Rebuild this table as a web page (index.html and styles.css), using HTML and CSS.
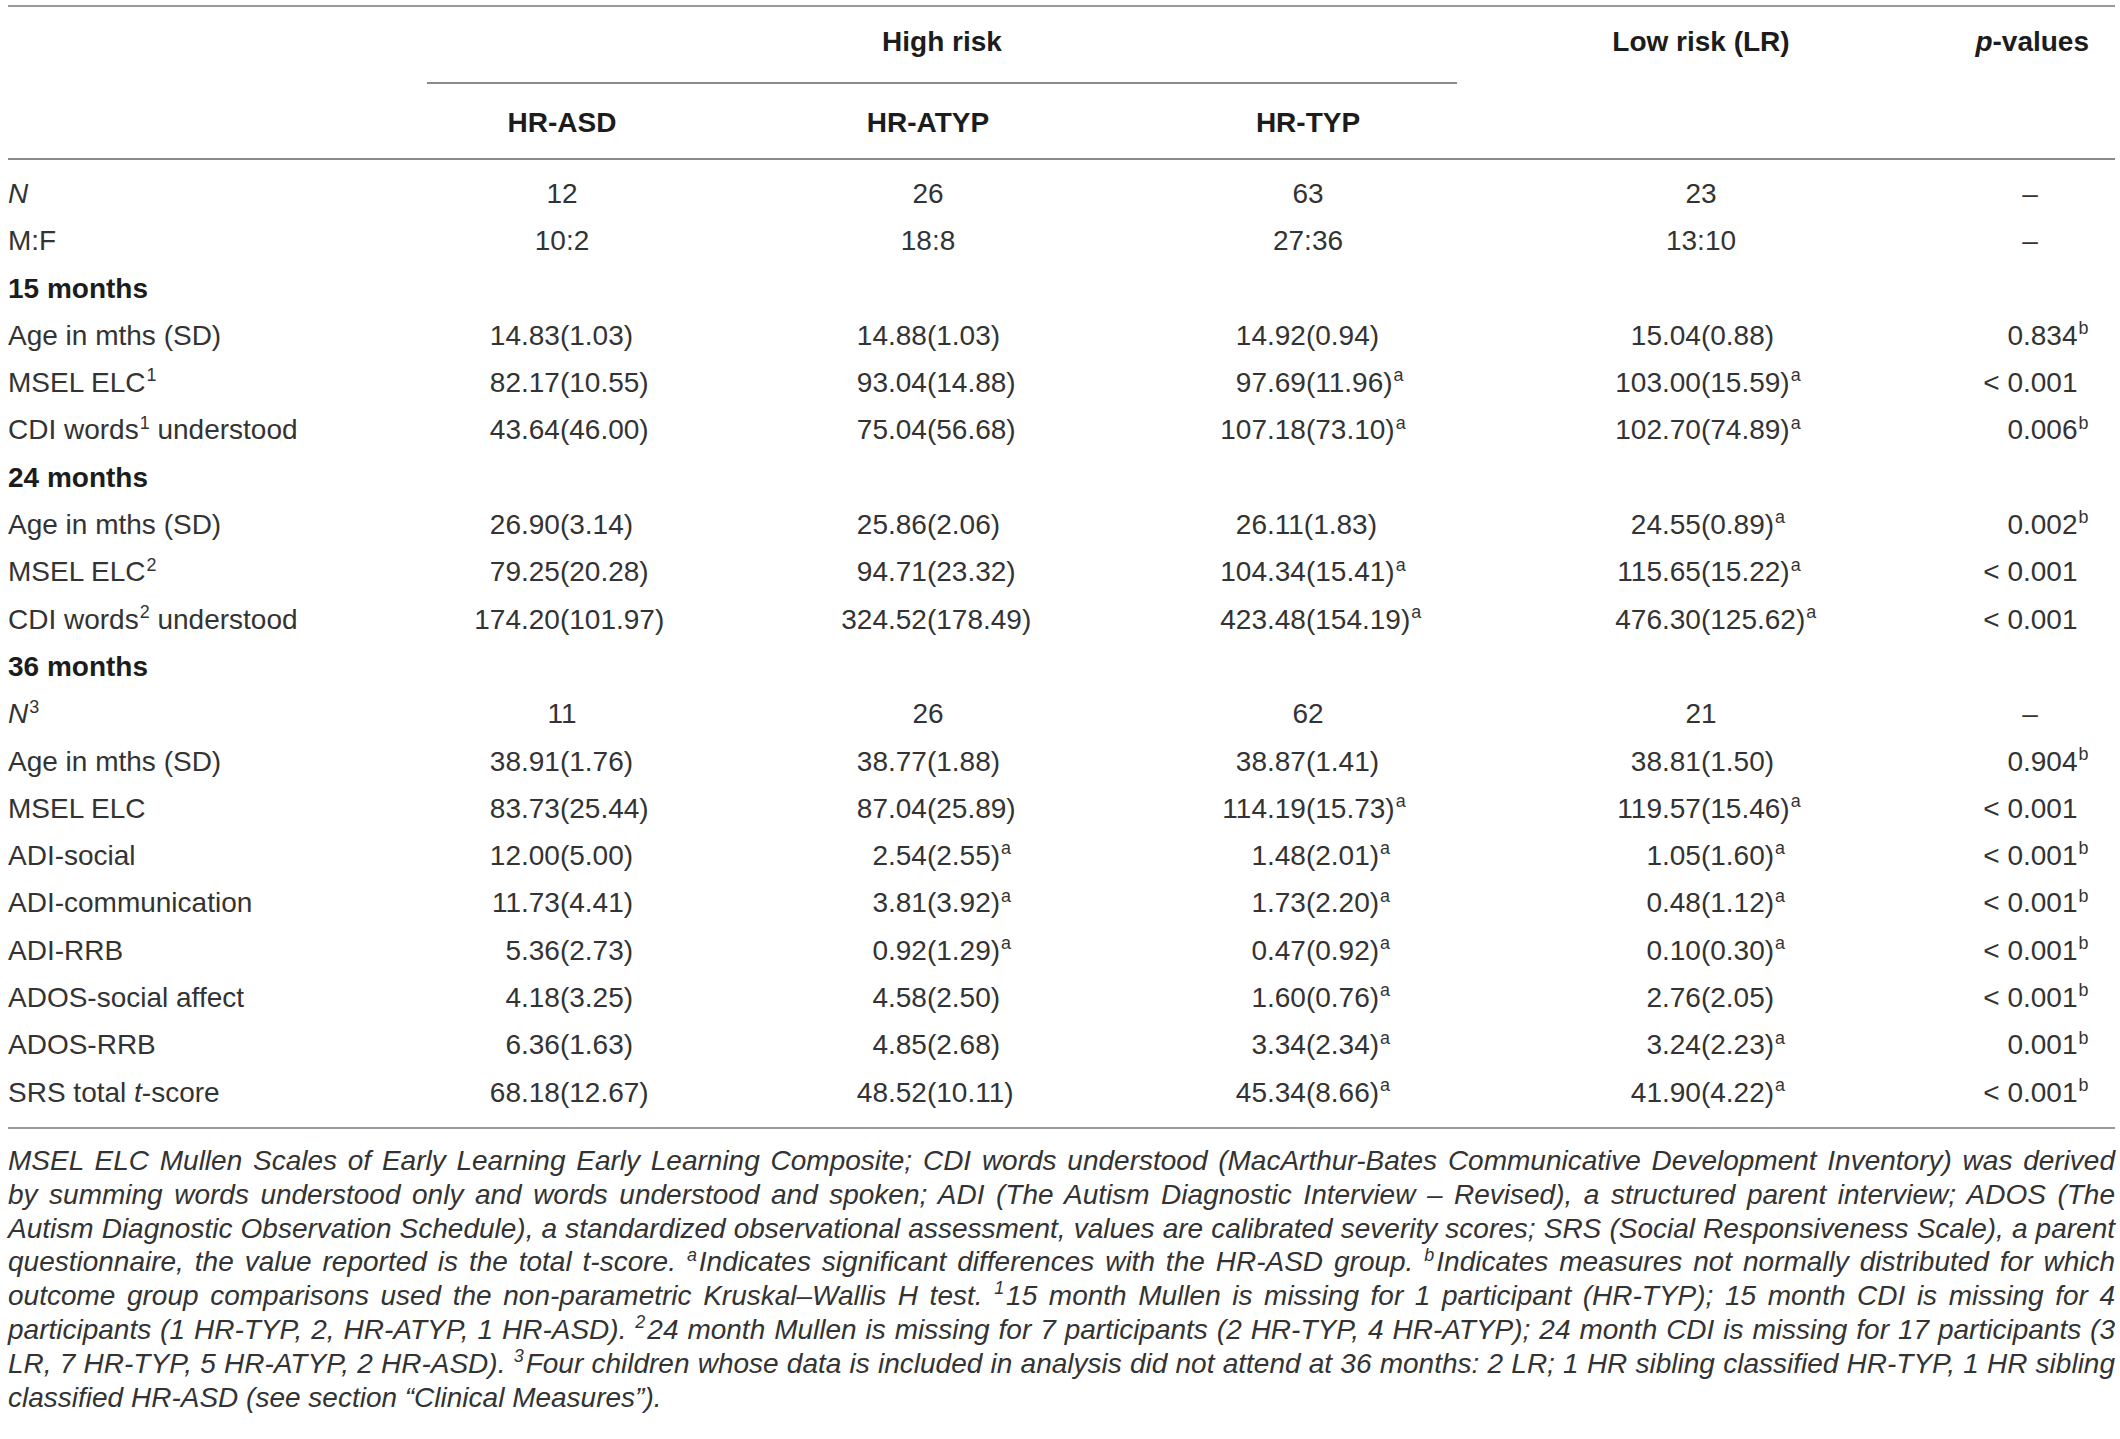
FILE: index.html
```html
<!DOCTYPE html>
<html lang="en">
<head>
<meta charset="UTF-8" />
<title>Participant characteristics by outcome group</title>
<link rel="stylesheet" href="styles.css">
</head>
<body>

<table class="data">
  <colgroup>
    <col class="c-lbl">
    <col class="c-asd">
    <col class="c-atyp">
    <col class="c-typ">
    <col class="c-lr">
    <col class="c-p">
  </colgroup>
  <thead>
    <tr class="top">
      <th></th>
      <th colspan="3" class="group">High risk</th>
      <th>Low risk (LR)</th>
      <th class="pv"><em>p</em>-values</th>
    </tr>
    <tr class="sub">
      <th></th>
      <th>HR-ASD</th>
      <th>HR-ATYP</th>
      <th>HR-TYP</th>
      <th></th>
      <th></th>
    </tr>
  </thead>
  <tbody>
    <tr>
      <td class="lbl"><em>N</em></td>
      <td class="c">12</td><td class="c">26</td><td class="c">63</td><td class="c">23</td><td class="c">–</td>
    </tr>
    <tr>
      <td class="lbl">M:F</td>
      <td class="c">10:2</td><td class="c">18:8</td><td class="c">27:36</td><td class="c">13:10</td><td class="c">–</td>
    </tr>
    <tr class="sect"><td class="lbl" colspan="6">15 months</td></tr>
    <tr>
      <td class="lbl">Age in mths (SD)</td>
      <td class="v"><span class="ip">14</span>.83(1.03)</td>
      <td class="v"><span class="ip">14</span>.88(1.03)</td>
      <td class="v"><span class="ip">14</span>.92(0.94)</td>
      <td class="v"><span class="ip">15</span>.04(0.88)</td>
      <td class="v"><span class="ip">0</span>.834<sup>b</sup></td>
    </tr>
    <tr>
      <td class="lbl">MSEL ELC<sup>1</sup></td>
      <td class="v"><span class="ip">82</span>.17(10.55)</td>
      <td class="v"><span class="ip">93</span>.04(14.88)</td>
      <td class="v"><span class="ip">97</span>.69(11.96)<sup>a</sup></td>
      <td class="v"><span class="ip">103</span>.00(15.59)<sup>a</sup></td>
      <td class="v"><span class="ip">&lt; 0</span>.001</td>
    </tr>
    <tr>
      <td class="lbl">CDI words<sup>1</sup> understood</td>
      <td class="v"><span class="ip">43</span>.64(46.00)</td>
      <td class="v"><span class="ip">75</span>.04(56.68)</td>
      <td class="v"><span class="ip">107</span>.18(73.10)<sup>a</sup></td>
      <td class="v"><span class="ip">102</span>.70(74.89)<sup>a</sup></td>
      <td class="v"><span class="ip">0</span>.006<sup>b</sup></td>
    </tr>
    <tr class="sect"><td class="lbl" colspan="6">24 months</td></tr>
    <tr>
      <td class="lbl">Age in mths (SD)</td>
      <td class="v"><span class="ip">26</span>.90(3.14)</td>
      <td class="v"><span class="ip">25</span>.86(2.06)</td>
      <td class="v"><span class="ip">26</span>.11(1.83)</td>
      <td class="v"><span class="ip">24</span>.55(0.89)<sup>a</sup></td>
      <td class="v"><span class="ip">0</span>.002<sup>b</sup></td>
    </tr>
    <tr>
      <td class="lbl">MSEL ELC<sup>2</sup></td>
      <td class="v"><span class="ip">79</span>.25(20.28)</td>
      <td class="v"><span class="ip">94</span>.71(23.32)</td>
      <td class="v"><span class="ip">104</span>.34(15.41)<sup>a</sup></td>
      <td class="v"><span class="ip">115</span>.65(15.22)<sup>a</sup></td>
      <td class="v"><span class="ip">&lt; 0</span>.001</td>
    </tr>
    <tr>
      <td class="lbl">CDI words<sup>2</sup> understood</td>
      <td class="v"><span class="ip">174</span>.20(101.97)</td>
      <td class="v"><span class="ip">324</span>.52(178.49)</td>
      <td class="v"><span class="ip">423</span>.48(154.19)<sup>a</sup></td>
      <td class="v"><span class="ip">476</span>.30(125.62)<sup>a</sup></td>
      <td class="v"><span class="ip">&lt; 0</span>.001</td>
    </tr>
    <tr class="sect"><td class="lbl" colspan="6">36 months</td></tr>
    <tr>
      <td class="lbl"><em>N</em><sup>3</sup></td>
      <td class="c">11</td><td class="c">26</td><td class="c">62</td><td class="c">21</td><td class="c">–</td>
    </tr>
    <tr>
      <td class="lbl">Age in mths (SD)</td>
      <td class="v"><span class="ip">38</span>.91(1.76)</td>
      <td class="v"><span class="ip">38</span>.77(1.88)</td>
      <td class="v"><span class="ip">38</span>.87(1.41)</td>
      <td class="v"><span class="ip">38</span>.81(1.50)</td>
      <td class="v"><span class="ip">0</span>.904<sup>b</sup></td>
    </tr>
    <tr>
      <td class="lbl">MSEL ELC</td>
      <td class="v"><span class="ip">83</span>.73(25.44)</td>
      <td class="v"><span class="ip">87</span>.04(25.89)</td>
      <td class="v"><span class="ip">114</span>.19(15.73)<sup>a</sup></td>
      <td class="v"><span class="ip">119</span>.57(15.46)<sup>a</sup></td>
      <td class="v"><span class="ip">&lt; 0</span>.001</td>
    </tr>
    <tr>
      <td class="lbl">ADI-social</td>
      <td class="v"><span class="ip">12</span>.00(5.00)</td>
      <td class="v"><span class="ip">2</span>.54(2.55)<sup>a</sup></td>
      <td class="v"><span class="ip">1</span>.48(2.01)<sup>a</sup></td>
      <td class="v"><span class="ip">1</span>.05(1.60)<sup>a</sup></td>
      <td class="v"><span class="ip">&lt; 0</span>.001<sup>b</sup></td>
    </tr>
    <tr>
      <td class="lbl">ADI-communication</td>
      <td class="v"><span class="ip">11</span>.73(4.41)</td>
      <td class="v"><span class="ip">3</span>.81(3.92)<sup>a</sup></td>
      <td class="v"><span class="ip">1</span>.73(2.20)<sup>a</sup></td>
      <td class="v"><span class="ip">0</span>.48(1.12)<sup>a</sup></td>
      <td class="v"><span class="ip">&lt; 0</span>.001<sup>b</sup></td>
    </tr>
    <tr>
      <td class="lbl">ADI-RRB</td>
      <td class="v"><span class="ip">5</span>.36(2.73)</td>
      <td class="v"><span class="ip">0</span>.92(1.29)<sup>a</sup></td>
      <td class="v"><span class="ip">0</span>.47(0.92)<sup>a</sup></td>
      <td class="v"><span class="ip">0</span>.10(0.30)<sup>a</sup></td>
      <td class="v"><span class="ip">&lt; 0</span>.001<sup>b</sup></td>
    </tr>
    <tr>
      <td class="lbl">ADOS-social affect</td>
      <td class="v"><span class="ip">4</span>.18(3.25)</td>
      <td class="v"><span class="ip">4</span>.58(2.50)</td>
      <td class="v"><span class="ip">1</span>.60(0.76)<sup>a</sup></td>
      <td class="v"><span class="ip">2</span>.76(2.05)</td>
      <td class="v"><span class="ip">&lt; 0</span>.001<sup>b</sup></td>
    </tr>
    <tr>
      <td class="lbl">ADOS-RRB</td>
      <td class="v"><span class="ip">6</span>.36(1.63)</td>
      <td class="v"><span class="ip">4</span>.85(2.68)</td>
      <td class="v"><span class="ip">3</span>.34(2.34)<sup>a</sup></td>
      <td class="v"><span class="ip">3</span>.24(2.23)<sup>a</sup></td>
      <td class="v"><span class="ip">0</span>.001<sup>b</sup></td>
    </tr>
    <tr>
      <td class="lbl">SRS total <em>t</em>-score</td>
      <td class="v"><span class="ip">68</span>.18(12.67)</td>
      <td class="v"><span class="ip">48</span>.52(10.11)</td>
      <td class="v"><span class="ip">45</span>.34(8.66)<sup>a</sup></td>
      <td class="v"><span class="ip">41</span>.90(4.22)<sup>a</sup></td>
      <td class="v"><span class="ip">&lt; 0</span>.001<sup>b</sup></td>
    </tr>
  </tbody>
</table>

<p class="note">
  <span class="ln">MSEL ELC Mullen Scales of Early Learning Early Learning Composite; CDI words understood (MacArthur-Bates Communicative Development Inventory) was derived</span>
  <span class="ln">by summing words understood only and words understood and spoken; ADI (The Autism Diagnostic Interview – Revised), a structured parent interview; ADOS (The</span>
  <span class="ln">Autism Diagnostic Observation Schedule), a standardized observational assessment, values are calibrated severity scores; SRS (Social Responsiveness Scale), a parent</span>
  <span class="ln">questionnaire, the value reported is the total t-score. <sup>a</sup>Indicates significant differences with the HR-ASD group. <sup>b</sup>Indicates measures not normally distributed for which</span>
  <span class="ln">outcome group comparisons used the non-parametric Kruskal–Wallis H test. <sup>1</sup>15 month Mullen is missing for 1 participant (HR-TYP); 15 month CDI is missing for 4</span>
  <span class="ln">participants (1 HR-TYP, 2, HR-ATYP, 1 HR-ASD). <sup>2</sup>24 month Mullen is missing for 7 participants (2 HR-TYP, 4 HR-ATYP); 24 month CDI is missing for 17 participants (3</span>
  <span class="ln">LR, 7 HR-TYP, 5 HR-ATYP, 2 HR-ASD). <sup>3</sup>Four children whose data is included in analysis did not attend at 36 months: 2 LR; 1 HR sibling classified HR-TYP, 1 HR sibling</span>
  <span class="ln last">classified HR-ASD (see section “Clinical Measures”).</span>
</p>

</body>
</html>
```

FILE: styles.css
```css
body {
  margin: 0;
  padding: 5px 5px 0 8px;
  font-family: "Liberation Sans", Arial, sans-serif;
  color: #333;
  background: #fff;
}
.data {
  width: 100%;
  border-collapse: collapse;
  table-layout: fixed;
  font-size: 28px;
  border-top: 2px solid #9a9a9a;
  border-bottom: 2px solid #9a9a9a;
}
.c-lbl { width: 419px; }
.c-asd { width: 270px; }
.c-atyp { width: 462px; }
.c-typ { width: 298px; }
.c-lr { width: 488px; }
.c-p { width: 170px; }

th {
  font-weight: bold;
  color: #1c1c1c;
  padding: 0;
  text-align: center;
}
.top th {
  height: 69px;
  padding-bottom: 6px;
}
.group {
  border-bottom: 2px solid #8a8a8a;
}
.sub th {
  height: 70px;
  padding-top: 4px;
  border-bottom: 2px solid #8a8a8a;
}
th.pv {
  text-align: right;
  padding-right: 26px;
}

td {
  height: 47.3px;
  line-height: 47.3px;
  padding: 0;
  white-space: nowrap;
}
tbody tr:first-child td {
  padding-top: 10px;
}
tbody tr:last-child td {
  padding-bottom: 11px;
}
.lbl {
  text-align: left;
}
.sect .lbl {
  font-weight: bold;
  color: #1c1c1c;
}
.c {
  text-align: center;
}
.v {
  text-align: left;
}
.ip {
  display: inline-block;
  width: 47px;
  text-align: right;
}
/* decimal points line up inside each column */
.v:nth-child(2) { padding-left: 47px; }
.v:nth-child(3) { padding-left: 144px; }
.v:nth-child(4) { padding-left: 61px; }
.v:nth-child(5) { padding-left: 158px; }
.v:nth-child(6) { padding-left: 31px; }

sup {
  font-size: 0.64em;
  line-height: 0;
  vertical-align: 0.6em;
  margin-left: 1px;
}

.note {
  margin: 15px 0 0;
  font-style: italic;
  font-size: 28px;
  line-height: 33.8px;
}
.ln {
  display: block;
  text-align: justify;
  text-align-last: justify;
}
.ln.last {
  text-align-last: left;
}
.note sup {
  margin-left: 0;
  margin-right: 2px;
}
```
